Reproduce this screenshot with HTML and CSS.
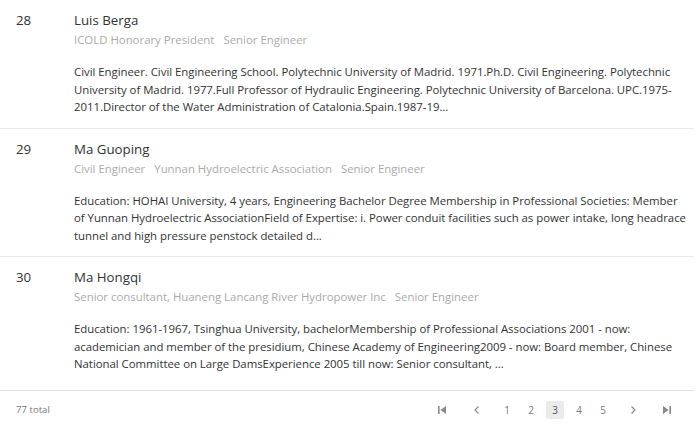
FILE: index.html
```html
<!DOCTYPE html>
<html lang="en">
<head>
    <meta charset="UTF-8">
    <title>Members</title>
    <link rel="stylesheet" href="styles.css">
</head>
<body>
    <ul class="member-list">
        <li class="member">
            <div class="member-no">28</div>
            <div class="member-body">
                <div class="member-name">Luis Berga</div>
                <div class="member-tags">
                    <span>ICOLD Honorary President</span>
                    <span>Senior Engineer</span>
                </div>
                <p class="member-desc">Civil Engineer. Civil Engineering School. Polytechnic University of Madrid. 1971.Ph.D. Civil Engineering. Polytechnic University of Madrid. 1977.Full Professor of Hydraulic Engineering. Polytechnic University of Barcelona. UPC.1975-2011.Director of the Water Administration of Catalonia.Spain.1987-19...</p>
            </div>
        </li>
        <li class="member">
            <div class="member-no">29</div>
            <div class="member-body">
                <div class="member-name">Ma Guoping</div>
                <div class="member-tags">
                    <span>Civil Engineer</span>
                    <span>Yunnan Hydroelectric Association</span>
                    <span>Senior Engineer</span>
                </div>
                <p class="member-desc">Education: HOHAI University, 4 years, Engineering Bachelor Degree Membership in Professional Societies: Member of Yunnan Hydroelectric AssociationField of Expertise: i. Power conduit facilities such as power intake, long headrace tunnel and high pressure penstock detailed d...</p>
            </div>
        </li>
        <li class="member">
            <div class="member-no">30</div>
            <div class="member-body">
                <div class="member-name">Ma Hongqi</div>
                <div class="member-tags">
                    <span>Senior consultant, Huaneng Lancang River Hydropower Inc</span>
                    <span>Senior Engineer</span>
                </div>
                <p class="member-desc">Education: 1961-1967, Tsinghua University, bachelorMembership of Professional Associations 2001 - now: academician and member of the presidium, Chinese Academy of Engineering2009 - now: Board member, Chinese National Committee on Large DamsExperience 2005 till now: Senior consultant, ...</p>
            </div>
        </li>
    </ul>

    <div class="pager">
        <div class="pager-total">77 total</div>
        <div class="pager-nav">
            <button class="pager-icon pager-first" title="First">
                <svg width="10" height="10" viewBox="0 0 10 10"><rect x="1" y="1" width="1.6" height="8" fill="currentColor"/><path d="M9 1v8L3.4 5z" fill="currentColor"/></svg>
            </button>
            <button class="pager-icon pager-prev" title="Previous">
                <svg width="10" height="10" viewBox="0 0 10 10"><path d="M6.5 1.5L3 5l3.5 3.5" fill="none" stroke="currentColor" stroke-width="1.2"/></svg>
            </button>
            <button class="pager-page">1</button>
            <button class="pager-page">2</button>
            <button class="pager-page active">3</button>
            <button class="pager-page">4</button>
            <button class="pager-page">5</button>
            <button class="pager-icon pager-next" title="Next">
                <svg width="10" height="10" viewBox="0 0 10 10"><path d="M3.5 1.5L7 5L3.5 8.5" fill="none" stroke="currentColor" stroke-width="1.2"/></svg>
            </button>
            <button class="pager-icon pager-last" title="Last">
                <svg width="10" height="10" viewBox="0 0 10 10"><path d="M1 1v8L6.6 5z" fill="currentColor"/><rect x="7.4" y="1" width="1.6" height="8" fill="currentColor"/></svg>
            </button>
        </div>
    </div>
</body>
</html>
```
FILE: styles.css
```css
body {
    margin: 0;
    padding: 0 2px 0 0;
    font-family: "Open Sans", "Noto Sans", sans-serif;
    color: #333;
    background: #fff;
}

.member-list {
    list-style: none;
    margin: 0;
    padding: 0;
}

.member {
    display: flex;
    padding: 10px 6px 12px 16px;
    border-bottom: 1px solid #ebebeb;
}

.member:last-child {
    border-bottom: none;
    padding-bottom: 17px;
}

.member-no {
    width: 58px;
    flex-shrink: 0;
    font-size: 13.3px;
    line-height: 20px;
}

.member-body {
    flex: 1;
    min-width: 0;
}

.member-name {
    font-size: 13.3px;
    line-height: 20px;
}

.member-tags {
    display: flex;
    gap: 9px;
    font-size: 11.4px;
    line-height: 20px;
    color: #aaa;
}

.member-desc {
    margin: 13px 0 0;
    font-size: 11.4px;
    line-height: 17.5px;
    letter-spacing: -0.03px;
    color: #333;
}

.pager {
    display: flex;
    align-items: center;
    justify-content: space-between;
    height: 38px;
    padding: 0 16px;
    border-top: 1px solid #e3e3e3;
}

.pager-total {
    font-size: 9.6px;
    color: #777;
}

.pager-nav {
    display: flex;
    align-items: center;
}

button {
    font-family: inherit;
    border: none;
    background: none;
    padding: 0;
    cursor: pointer;
}

.pager-icon {
    display: flex;
    align-items: center;
    justify-content: center;
    width: 18px;
    height: 18px;
    color: #8a8a8a;
}

.pager-first { margin-right: 9px; }
.pager-prev { margin: 0 9px 0 8px; }
.pager-next { margin: 0 8px 0 9px; }
.pager-last { margin: 0 2px 0 8px; }

.pager-page {
    width: 18px;
    height: 18px;
    margin: 0 3px;
    border-radius: 2px;
    font-size: 10px;
    line-height: 18px;
    color: #777;
}

.pager-page.active {
    background: #ebebeb;
    color: #555;
}
```
